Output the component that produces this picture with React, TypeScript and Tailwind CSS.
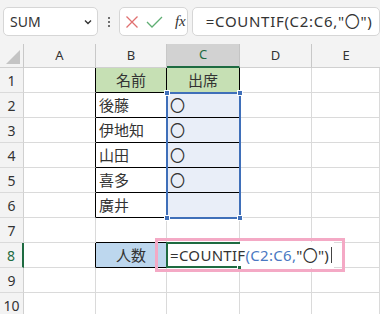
import React from "react";

const FONT = { fontFamily: '"Noto Sans", "Noto Sans CJK JP", sans-serif' };
const JP = { fontFamily: '"Noto Sans CJK JP", "Noto Sans", sans-serif' };

const GRID = "border-r-[#dadada]";
const GRIDB = "border-b-[#dadada]";

type CellProps = {
  r?: string;
  b?: string;
  className?: string;
  children?: React.ReactNode;
};

function Cell({ r = GRID, b = GRIDB, className = "", children }: CellProps) {
  return (
    <div className={`border-r border-b ${r} ${b} flex items-center overflow-hidden whitespace-nowrap ${className}`}>
      {children}
    </div>
  );
}

const names = ["後藤", "伊地知", "山田", "喜多", "廣井"];

function ColHeader({ label, active, last }: { label: string; active?: boolean; last?: boolean }) {
  return (
    <div
      className={`flex items-center justify-center text-[13px] ${
        active
          ? "bg-[#d2d2d2] text-[#1e6b41] border-b-2 border-b-[#1e6b41] border-r border-r-[#c4c4c4]"
          : `bg-[#f3f3f3] text-[#333] border-b border-b-[#d0d0d0] ${last ? "" : "border-r border-r-[#c8c8c8]"}`
      }`}
    >
      {label}
    </div>
  );
}

function RowHeader({ n, active }: { n: number; active?: boolean }) {
  return (
    <div
      className={`flex items-center justify-center text-[14px] bg-[#f3f3f3] border-b border-b-[#dadada] ${
        active ? "text-[#1e6b41] border-r-2 border-r-[#1e6b41]" : "text-[#333] border-r border-r-[#d0d0d0]"
      }`}
    >
      {n}
    </div>
  );
}

export default function App() {
  return (
    <div className="w-[380px] h-[314px] overflow-hidden bg-white relative" style={FONT}>
      {/* toolbar */}
      <div className="h-[44px] bg-[#f3f3f3] flex items-start pt-[7px] pl-[3px]">
        <div className="w-[101px] h-[29px] bg-white border border-[#d6d6d6] rounded-[5px] flex items-center justify-between pl-[6px] pr-[4px]">
          <span className="text-[14px] text-[#333]">SUM</span>
          <svg width="10" height="10" viewBox="0 0 10 10">
            <path d="M2 3.5 L5 6.5 L8 3.5" fill="none" stroke="#333" strokeWidth="1.4" />
          </svg>
        </div>
        <div className="w-[22px] h-[29px] flex flex-col items-center justify-center gap-[2px]">
          <span className="w-[2px] h-[2px] bg-[#444] rounded-full" />
          <span className="w-[2px] h-[2px] bg-[#444] rounded-full" />
          <span className="w-[2px] h-[2px] bg-[#444] rounded-full" />
        </div>
        <div className="w-[73px] h-[29px] bg-white border border-[#d6d6d6] rounded-[5px] flex items-center pl-[5px]">
          <svg width="14" height="14" viewBox="0 0 14 14">
            <path d="M1.5 1.5 L12.5 12.5 M12.5 1.5 L1.5 12.5" stroke="#e07070" strokeWidth="1.3" fill="none" />
          </svg>
          <svg width="17" height="14" viewBox="0 0 17 14" className="ml-[7px]">
            <path d="M1 7 L6 12 L16 2" stroke="#5fae73" strokeWidth="1.3" fill="none" />
          </svg>
          <span
            className="ml-[12px] text-[15px] italic text-[#333] leading-none"
            style={{ fontFamily: '"Liberation Serif", serif' }}
          >
            fx
          </span>
        </div>
        <div className="ml-[4px] w-[200px] h-[29px] bg-white border border-[#d6d6d6] rounded-[5px] flex items-center pl-[13px]">
          <span className="text-[15px] text-[#333] whitespace-nowrap tracking-[0.7px]">
            =COUNTIF(C2:C6,"<span style={JP}>〇</span>")
          </span>
        </div>
      </div>

      {/* sheet */}
      <div className="relative">
        <div className="grid grid-cols-[24px_72px_71px_73px_72px_68px] grid-rows-[24px_repeat(10,25px)]">
          {/* corner */}
          <div className="bg-[#f3f3f3] border-r border-r-[#c8c8c8] border-b border-b-[#d0d0d0] flex items-end justify-end p-[3px]">
            <svg width="14" height="14" viewBox="0 0 14 14">
              <path d="M14 0 L14 14 L0 14 Z" fill="#c4c4c4" />
            </svg>
          </div>
          <ColHeader label="A" />
          <ColHeader label="B" />
          <ColHeader label="C" active />
          <ColHeader label="D" />
          <ColHeader label="E" last />

          {/* row 1 */}
          <RowHeader n={1} />
          <Cell r="border-r-black" />
          <Cell r="border-r-black" b="border-b-black" className="bg-[#c6e0b4] justify-center text-[15px] text-[#333]">
            <span style={JP}>名前</span>
          </Cell>
          <Cell r="border-r-black" b="border-b-[#2b5ea8]" className="bg-[#c6e0b4] justify-center text-[15px] text-[#333]">
            <span style={JP}>出席</span>
          </Cell>
          <Cell />
          <Cell />

          {names.map((n, i) => (
            <React.Fragment key={n}>
              <RowHeader n={i + 2} />
              <Cell r="border-r-black" />
              <Cell r="border-r-black" b="border-b-black" className="pl-[3px] text-[15px] text-[#333]">
                <span style={JP}>{n}</span>
              </Cell>
              <Cell r="border-r-black" b="border-b-black" className="bg-[#e9eef8] pl-[3px] text-[15px] text-[#333]">
                <span style={JP}>{i < 4 ? "〇" : ""}</span>
              </Cell>
              <Cell />
              <Cell />
            </React.Fragment>
          ))}

          {/* row 7 */}
          <RowHeader n={7} />
          <Cell />
          <Cell b="border-b-black" />
          <Cell />
          <Cell />
          <Cell />

          {/* row 8 */}
          <RowHeader n={8} active />
          <Cell r="border-r-black" />
          <Cell r="border-r-black" b="border-b-black" className="bg-[#bdd7ee] justify-center text-[15px] text-[#333]">
            <span style={JP}>人数</span>
          </Cell>
          <Cell />
          <Cell />
          <Cell />

          {[9, 10].map((n) => (
            <React.Fragment key={n}>
              <RowHeader n={n} />
              <Cell />
              <Cell />
              <Cell />
              <Cell />
              <Cell />
            </React.Fragment>
          ))}
        </div>

        {/* selected range C2:C6 */}
        <div className="absolute left-[166px] top-[48px] w-[75px] h-[127px] border-2 border-[#3f6fb9] pointer-events-none" />
        <span className="absolute left-[164px] top-[46px] w-[6px] h-[6px] bg-[#3f6fb9] border border-white" />
        <span className="absolute left-[237px] top-[46px] w-[6px] h-[6px] bg-[#3f6fb9] border border-white" />
        <span className="absolute left-[164px] top-[171px] w-[6px] h-[6px] bg-[#3f6fb9] border border-white" />
        <span className="absolute left-[237px] top-[171px] w-[6px] h-[6px] bg-[#3f6fb9] border border-white" />

        {/* editing cell C8 */}
        <div className="absolute left-[166px] top-[198px] w-[168px] h-[26px] bg-white flex items-center pl-[4px]">
          <span className="text-[15px] text-[#333] whitespace-nowrap tracking-[0.3px]">
            =COUNTIF<span className="text-[#4a78c2]">(C2:C6,</span>"<span style={JP}>〇</span>")
          </span>
          <span className="ml-[2px] w-[1px] h-[16px] bg-[#444]" />
        </div>
        <div className="absolute left-[166px] top-[198px] w-[74px] h-[26px] border-t-2 border-b-2 border-l-2 border-[#1e6b41]" />
        <span className="absolute left-[237px] top-[221px] w-[5px] h-[5px] bg-[#1e6b41] border border-white" />

        {/* annotation */}
        <div className="absolute left-[155px] top-[194px] w-[190px] h-[34px] border-[3px] border-[#f4a9c5]" />
      </div>
    </div>
  );
}
